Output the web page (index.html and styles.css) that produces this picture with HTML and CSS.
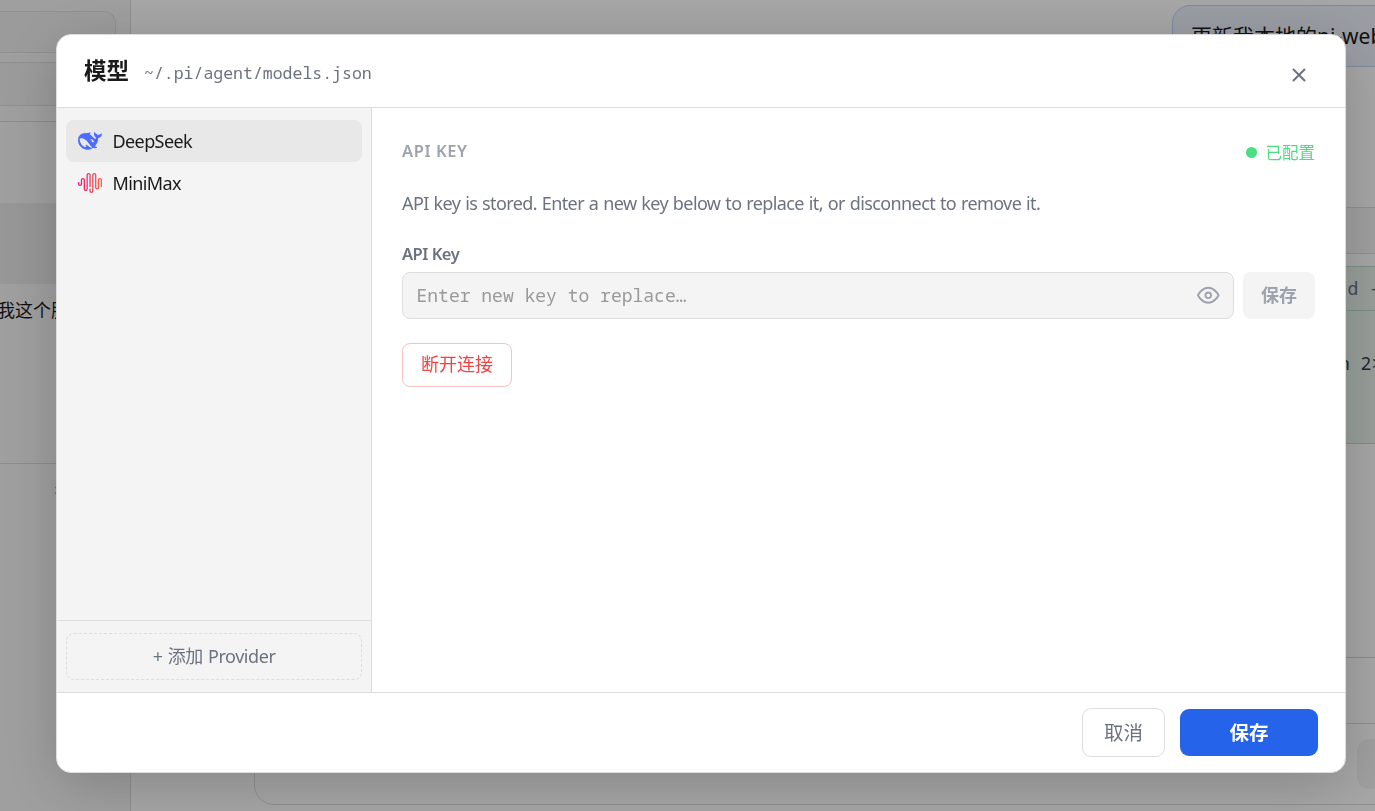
FILE: index.html
```
<!DOCTYPE html>
<html lang="zh-CN">
<head>
    <meta charset="UTF-8">
    <meta name="viewport" content="width=device-width, initial-scale=1.0">
    <title>模型</title>
    <link rel="stylesheet" href="styles.css">
</head>
<body>
    <div class="app">
        <aside class="side">
            <div class="side-box first"></div>
            <div class="side-box second"></div>
            <div class="side-list">
                <div class="session active"></div>
                <div class="session">我这个服务器</div>
            </div>
            <div class="side-files">›</div>
        </aside>
        <main class="chat">
            <div class="bubble">更新我本地的pi-web</div>
            <div class="tool-row"></div>
            <div class="tool-card">
                <div class="tool-head"><span>read -</span></div>
                <div class="tool-body"><span>n 2&gt;</span></div>
            </div>
            <div class="reply"></div>
            <div class="composer">
                <div class="send"></div>
            </div>
        </main>
    </div>

    <div class="overlay">
        <div class="modal">
            <header class="modal-header">
                <h2>模型</h2>
                <span class="path">~/.pi/agent/models.json</span>
                <button class="close" aria-label="Close">
                    <svg width="14" height="14" viewBox="0 0 14 14" fill="none" stroke="currentColor" stroke-width="2" stroke-linecap="round"><path d="M1.5 1.5l11 11M12.5 1.5l-11 11"/></svg>
                </button>
            </header>

            <div class="modal-body">
                <nav class="providers">
                    <div class="provider-list">
                        <div class="provider selected">
                            <svg width="24" height="24" viewBox="0 0 24 24" fill="#4D6BFE"><path d="M23.748 4.482c-.254-.124-.364.113-.512.234-.051.039-.094.09-.137.136-.372.397-.806.657-1.373.626-.829-.046-1.537.214-2.163.848-.133-.782-.575-1.248-1.247-1.548-.352-.156-.708-.311-.955-.65-.172-.241-.219-.51-.305-.774-.055-.16-.11-.323-.293-.35-.2-.031-.278.136-.356.276-.313.572-.434 1.202-.422 1.84.027 1.436.633 2.58 1.838 3.393.137.093.172.187.129.323-.082.28-.18.552-.266.833-.055.179-.137.217-.329.14a5.526 5.526 0 01-1.736-1.18c-.857-.828-1.631-1.742-2.597-2.458a11.365 11.365 0 00-.689-.471c-.985-.957.13-1.743.388-1.836.27-.098.093-.432-.779-.428-.872.004-1.67.295-2.687.684a3.055 3.055 0 01-.465.137 9.597 9.597 0 00-2.883-.102c-1.885.21-3.39 1.102-4.497 2.623C.082 8.606-.231 10.684.152 12.85c.403 2.284 1.569 4.175 3.36 5.653 1.858 1.533 3.997 2.284 6.438 2.14 1.482-.085 3.133-.284 4.994-1.86.47.234.962.327 1.78.397.63.059 1.236-.03 1.705-.128.735-.156.684-.837.419-.961-2.155-1.004-1.682-.595-2.113-.926 1.096-1.296 2.746-2.642 3.392-7.003.05-.347.007-.565 0-.845-.004-.17.035-.237.23-.256a4.173 4.173 0 001.545-.475c1.396-.763 1.96-2.015 2.093-3.517.02-.23-.004-.467-.247-.588zM11.581 18c-2.089-1.642-3.102-2.183-3.52-2.16-.392.024-.321.471-.235.763.09.288.207.486.371.739.114.167.192.416-.113.603-.673.416-1.842-.14-1.897-.167-1.361-.802-2.5-1.86-3.301-3.307-.774-1.393-1.224-2.887-1.298-4.482-.02-.386.093-.522.477-.592a4.696 4.696 0 011.529-.039c2.132.312 3.946 1.265 5.468 2.774.868.86 1.525 1.887 2.202 2.891.72 1.066 1.494 2.082 2.48 2.914.348.292.625.514.891.677-.802.09-2.14.11-3.054-.614zm1-6.44a.306.306 0 01.415-.287.302.302 0 01.2.288.306.306 0 01-.31.307.303.303 0 01-.304-.308zm3.11 1.596c-.2.081-.399.151-.59.16a1.245 1.245 0 01-.798-.254c-.274-.23-.47-.358-.552-.758a1.73 1.73 0 01.016-.588c.07-.327-.008-.537-.239-.727-.187-.156-.426-.199-.688-.199a.559.559 0 01-.254-.078c-.11-.054-.2-.19-.114-.358.028-.054.16-.186.192-.21.356-.202.767-.136 1.146.016.352.144.618.408 1.001.782.391.451.462.576.685.914.176.265.336.537.445.848.067.195-.019.354-.25.452z"/></svg>
                            <span>DeepSeek</span>
                        </div>
                        <div class="provider">
                            <svg width="24" height="24" viewBox="0 0 24 24">
                                <defs>
                                    <linearGradient id="mm" x1="0" x2="1" y1="0.5" y2="0.5">
                                        <stop offset="0" stop-color="#E2167E"/>
                                        <stop offset="1" stop-color="#FE603C"/>
                                    </linearGradient>
                                </defs>
                                <path fill="url(#mm)" d="M16.278 2c1.156 0 2.093.927 2.093 2.07v12.501a.74.74 0 00.744.709.74.74 0 00.743-.709V9.099a2.06 2.06 0 012.071-2.049A2.06 2.06 0 0124 9.1v6.561a.649.649 0 01-.652.645.649.649 0 01-.653-.645V9.1a.762.762 0 00-.766-.758.762.762 0 00-.766.758v7.472a2.037 2.037 0 01-2.048 2.026 2.037 2.037 0 01-2.048-2.026v-12.5a.785.785 0 00-.788-.753.785.785 0 00-.789.752l-.001 15.904A2.037 2.037 0 0113.441 22a2.037 2.037 0 01-2.048-2.026V18.04c0-.356.292-.645.652-.645.36 0 .652.289.652.645v1.934c0 .263.142.506.372.638.23.131.514.131.744 0a.734.734 0 00.372-.638V4.07c0-1.143.937-2.07 2.093-2.07zm-5.674 0c1.156 0 2.093.927 2.093 2.07v11.523a.648.648 0 01-.652.645.648.648 0 01-.652-.645V4.07a.785.785 0 00-.789-.78.785.785 0 00-.789.78v14.013a2.06 2.06 0 01-2.07 2.048 2.06 2.06 0 01-2.071-2.048V9.1a.762.762 0 00-.766-.758.762.762 0 00-.766.758v3.8a2.06 2.06 0 01-2.071 2.049A2.06 2.06 0 010 12.9v-1.378c0-.357.292-.646.652-.646.36 0 .653.29.653.646V12.9c0 .418.343.757.766.757s.766-.339.766-.757V9.099a2.06 2.06 0 012.07-2.048 2.06 2.06 0 012.071 2.048v8.984c0 .419.343.758.767.758.423 0 .766-.339.766-.758V4.07c0-1.143.937-2.07 2.093-2.07z"/>
                            </svg>
                            <span>MiniMax</span>
                        </div>
                    </div>
                    <div class="provider-add">
                        <button class="add">+ 添加 Provider</button>
                    </div>
                </nav>

                <section class="detail">
                    <div class="detail-top">
                        <h3>API KEY</h3>
                        <span class="status">已配置</span>
                    </div>
                    <p class="hint">API key is stored. Enter a new key below to replace it, or disconnect to remove it.</p>
                    <label class="label" for="key">API Key</label>
                    <div class="key-row">
                        <div class="key-field">
                            <input id="key" type="text" placeholder="Enter new key to replace…">
                            <svg width="22.5" height="22.5" viewBox="0 0 24 24" fill="none" stroke="#9ca3af" stroke-width="2" stroke-linecap="round" stroke-linejoin="round"><path d="M1 12s4-8 11-8 11 8 11 8-4 8-11 8-11-8-11-8z"/><circle cx="12" cy="12" r="3"/></svg>
                        </div>
                        <button class="save-key">保存</button>
                    </div>
                    <button class="disconnect">断开连接</button>
                </section>
            </div>

            <footer class="modal-footer">
                <button class="cancel">取消</button>
                <button class="save">保存</button>
            </footer>
        </div>
    </div>
</body>
</html>
```

FILE: styles.css
```
* {
    box-sizing: border-box;
}
body {
    margin: 0;
    height: 811px;
    overflow: hidden;
    font-family: "Noto Sans", "Noto Sans CJK SC", sans-serif;
    font-size: 18px;
    color: #1a1a1a;
    background: #fff;
}
button {
    font-family: inherit;
    padding: 0;
    cursor: pointer;
}
h2, h3, p {
    margin: 0;
}

/* page behind the dialog */
.app {
    display: grid;
    grid-template-columns: 131px 1fr;
    height: 811px;
}
.side {
    background: #f5f5f5;
    border-right: 1px solid #ddd;
    overflow: hidden;
}
.side-box {
    background: #efefef;
    border: 1px solid #ddd;
    border-left: 0;
}
.side-box.first {
    width: 116px;
    height: 42px;
    margin-top: 11px;
    border-radius: 0 12px 0 0;
}
.side-box.second {
    height: 44px;
    margin-top: 9px;
}
.side-list {
    margin-top: 15px;
    padding-top: 81px;
    height: 343px;
    border-top: 1px solid #d8d8d8;
    border-bottom: 1px solid #d8d8d8;
}
.session {
    height: 81px;
    padding-top: 12px;
    margin-left: -3px;
    font-size: 18px;
    white-space: nowrap;
}
.session.active {
    background: #e8e8e8;
}
.side-files {
    padding: 12px 0 0 54px;
    color: #9ca3af;
}
.chat {
    display: flex;
    flex-direction: column;
    overflow: hidden;
}
.bubble {
    width: 300px;
    height: 62px;
    margin: 5px 0 0 1041px;
    padding: 14px 18px;
    border: 1px solid #bfd4f5;
    border-radius: 18px;
    background: #edf2fc;
    font-size: 21px;
    line-height: 32px;
    white-space: nowrap;
    flex-shrink: 0;
}
.tool-row {
    height: 47px;
    margin-top: 140px;
    background: #f6f6f6;
    border: solid #ddd;
    border-width: 1px 0;
}
.tool-card {
    height: 178px;
    margin-top: 12px;
    background: #eaf3ed;
    border: solid #b5dfc8;
    border-width: 1px 0;
    font: 18px "Noto Sans Mono", "Liberation Mono", monospace;
}
.tool-head {
    height: 44px;
    padding: 9px 0 0 1184px;
    border-bottom: 1px solid #b5dfc8;
    color: #6b7280;
    white-space: nowrap;
}
.tool-body {
    padding: 40px 0 0 1208px;
    color: #374151;
    white-space: nowrap;
}
.reply {
    height: 214px;
    border-bottom: 1px solid #c5dfd0;
}
.composer {
    height: 82px;
    margin: 65px -100px 6px 123px;
    padding: 15px 0 0 1102px;
    border: 1px solid #ddd;
    border-radius: 20px;
    flex-shrink: 0;
}
.send {
    width: 50px;
    height: 50px;
    border-radius: 12px;
    background: #f4f4f4;
}

/* dialog */
.overlay {
    position: fixed;
    inset: 0;
    display: flex;
    justify-content: center;
    padding: 34px 29px 0 56px;
    background: rgba(0, 0, 0, 0.35);
}
.modal {
    display: flex;
    flex-direction: column;
    width: 1290px;
    height: 739px;
    background: #fff;
    border: 1px solid #ddd;
    border-radius: 15px;
    box-shadow: 0 12px 60px rgba(0, 0, 0, 0.2);
    overflow: hidden;
}
.modal-header {
    display: flex;
    align-items: center;
    height: 73px;
    padding: 0 39px 0 27px;
    border-bottom: 1px solid #ddd;
}
.modal-header h2 {
    font-size: 22.5px;
    line-height: 30px;
    font-weight: 700;
}
.path {
    margin: 2px 0 0 15px;
    font: 16.5px "Noto Sans Mono", "Liberation Mono", monospace;
    color: #6b7280;
}
.close {
    display: flex;
    margin: 7px 0 0 auto;
    border: 0;
    background: none;
    color: #6b7280;
}
.modal-body {
    display: flex;
    height: 584px;
}
.providers {
    display: flex;
    flex-direction: column;
    width: 315px;
    background: #f4f4f4;
    border-right: 1px solid #ddd;
}
.provider-list {
    flex: 1;
    padding: 12px 9px;
}
.provider {
    display: flex;
    align-items: center;
    gap: 10.5px;
    height: 42px;
    padding-left: 12px;
    border-radius: 8px;
    letter-spacing: -0.6px;
}
.provider.selected {
    background: #e8e8e8;
}
.provider-add {
    height: 72px;
    padding: 12px 9px;
    border-top: 1px solid #ddd;
}
.add {
    width: 296px;
    height: 47px;
    padding-bottom: 3px;
    border: 1px dashed #ddd;
    border-radius: 8px;
    background: none;
    color: #6b7280;
    font-size: 18px;
    letter-spacing: -0.45px;
    word-spacing: 1px;
}
.detail {
    flex: 1;
    padding: 30px 30px 0;
}
.detail-top {
    display: flex;
    align-items: center;
    justify-content: space-between;
    height: 28px;
}
.detail-top h3 {
    padding-bottom: 3px;
    font-size: 16.5px;
    font-weight: 600;
    letter-spacing: 0.6px;
    color: #9ca3af;
}
.status {
    display: flex;
    align-items: center;
    gap: 9px;
    font-size: 16.5px;
    color: #4ade80;
}
.status::before {
    content: "";
    width: 11px;
    height: 11px;
    border-radius: 50%;
    background: #4ade80;
}
.hint {
    margin-top: 23px;
    line-height: 28px;
    letter-spacing: -0.6px;
    word-spacing: 0.75px;
    color: #6b7280;
    white-space: nowrap;
}
.label {
    display: block;
    margin-top: 25px;
    font-size: 16.5px;
    line-height: 24px;
    font-weight: 600;
    letter-spacing: -0.5px;
    color: #6b7280;
}
.key-row {
    display: flex;
    gap: 9px;
    margin-top: 6px;
}
.key-field {
    display: flex;
    align-items: center;
    width: 832px;
    height: 47px;
    padding: 0 13.5px;
    border: 1px solid #ddd;
    border-radius: 8px;
    background: #f4f4f4;
}
.key-field svg {
    margin-bottom: 1px;
}
.key-field input {
    flex: 1;
    padding: 0 0 2px;
    border: 0;
    outline: 0;
    background: none;
    font: 18px "Noto Sans Mono", "Liberation Mono", monospace;
}
.key-field input::placeholder {
    color: #999;
}
.save-key {
    width: 72px;
    height: 47px;
    padding-bottom: 3px;
    border: 0;
    border-radius: 8px;
    background: #f4f4f4;
    color: #9ca3af;
    font-size: 18px;
    font-weight: 600;
}
.disconnect {
    width: 110px;
    height: 44px;
    margin-top: 24px;
    padding-bottom: 4px;
    border: 1px solid #fbc0c0;
    border-radius: 8px;
    background: none;
    color: #ef4444;
    font-size: 18px;
}
.modal-footer {
    display: flex;
    align-items: center;
    justify-content: flex-end;
    gap: 15px;
    height: 80px;
    padding-right: 27px;
    border-top: 1px solid #ddd;
}
.cancel {
    width: 83px;
    height: 49px;
    padding-bottom: 2px;
    border: 1px solid #ddd;
    border-radius: 9px;
    background: none;
    color: #6b7280;
    font-size: 19.5px;
}
.save {
    width: 138px;
    height: 47px;
    padding-bottom: 2px;
    border: 0;
    border-radius: 9px;
    background: #2563eb;
    color: #fff;
    font-size: 19.5px;
    font-weight: 600;
}
```
